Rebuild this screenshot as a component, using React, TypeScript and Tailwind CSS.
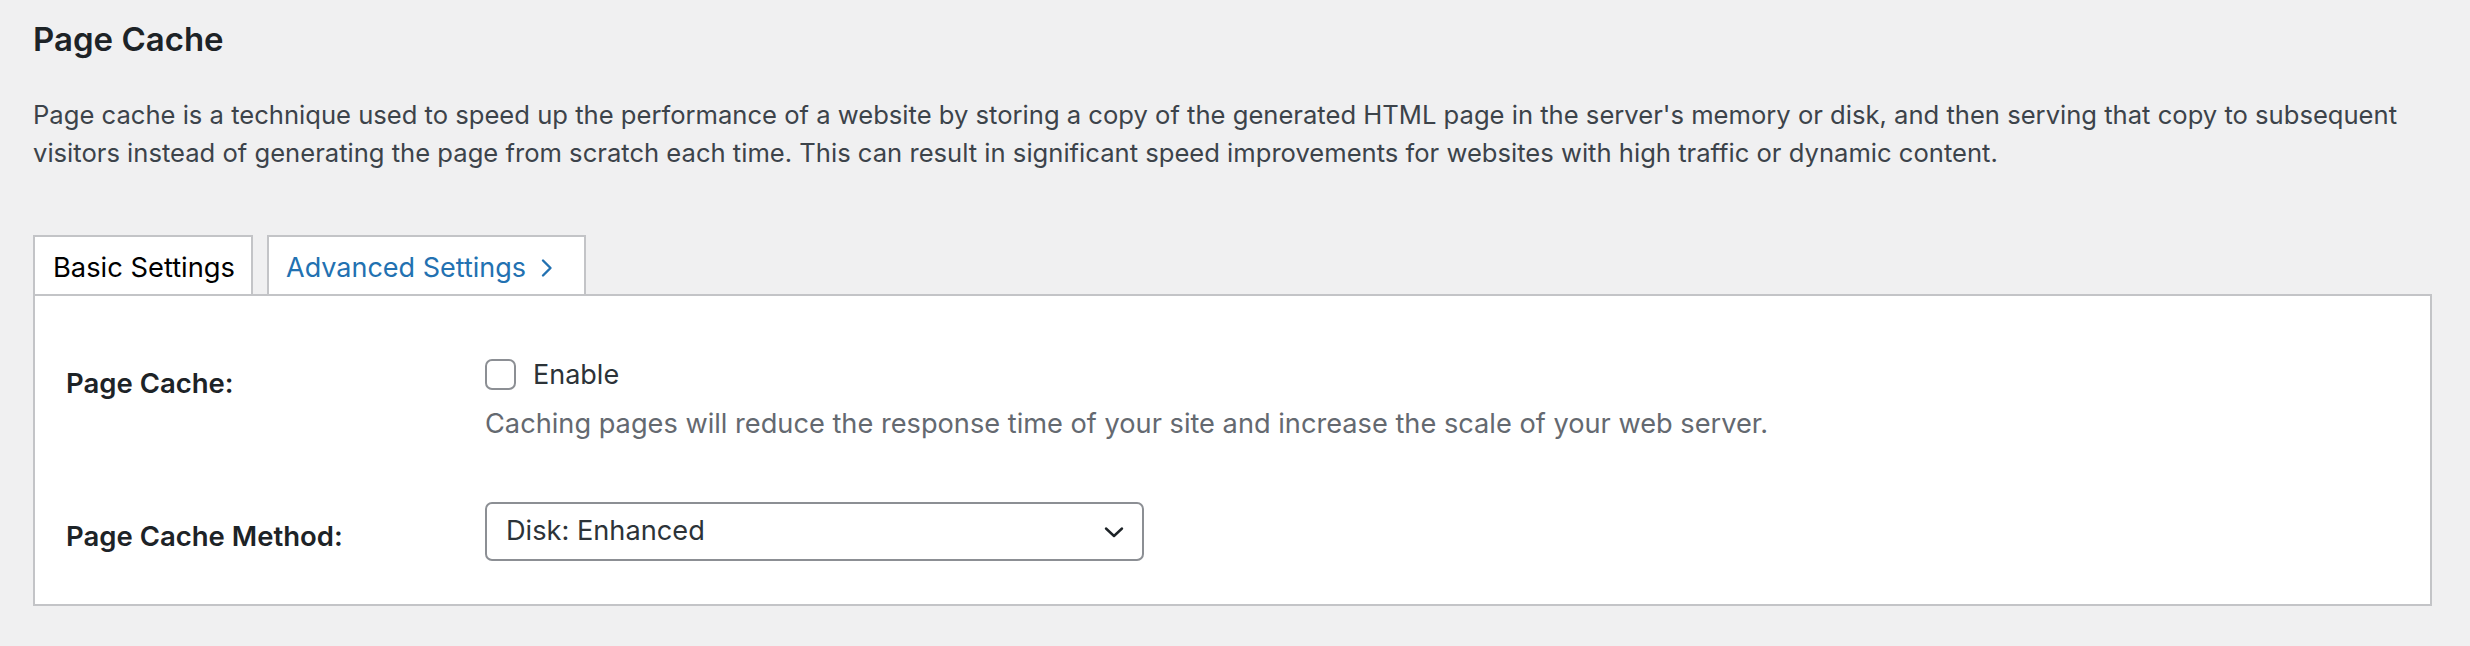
import React from "react";

function ChevronRight() {
  return (
    <svg width="14" height="22" viewBox="0 0 14 22" fill="none" className="ml-[14px]">
      <path d="M3 3.5 L10.5 11 L3 18.5" stroke="#2271b1" strokeWidth="2.4" strokeLinecap="round" strokeLinejoin="round" />
    </svg>
  );
}

function ChevronDown() {
  return (
    <svg width="22" height="14" viewBox="0 0 22 14" fill="none">
      <path d="M3 3.5 L11 11 L19 3.5" stroke="#1d2327" strokeWidth="2.4" strokeLinecap="round" strokeLinejoin="round" />
    </svg>
  );
}

export default function App() {
  return (
    <div className="min-h-screen w-full bg-[#f0f0f1] font-['Inter',sans-serif] pl-[33px] pr-[38px]">
      <h1 className="pt-[19px] text-[33px] leading-[40px] font-semibold text-[#1d2327]">Page Cache</h1>
      <p className="mt-[37px] text-[25.6px] leading-[38px] text-[#3c434a] whitespace-nowrap">
        Page cache is a technique used to speed up the performance of a website by storing a copy of the generated HTML page in the server's memory or disk, and then serving that copy to subsequent
        <br />
        visitors instead of generating the page from scratch each time. This can result in significant speed improvements for websites with high traffic or dynamic content.
      </p>
      <div className="mt-[63px] flex gap-[14px]">
        <div className="h-[59px] border-2 border-b-0 border-[#c3c4c7] bg-white pl-[18px] pr-[16px] pt-[5px] flex items-center text-[27.3px] text-[#000000]">
          Basic Settings
        </div>
        <div className="h-[59px] border-2 border-b-0 border-[#c3c4c7] bg-white pl-[17px] pr-[30px] pt-[5px] flex items-center text-[27px] text-[#2271b1]">
          Advanced Settings
          <ChevronRight />
        </div>
      </div>
      <div className="border-2 border-[#c3c4c7] bg-white pl-[31px] pb-[43px]">
        <div className="grid grid-cols-[419px_1fr]">
          <div className="pt-[72px] text-[27.5px] leading-[30px] font-semibold text-[#1d2327]">Page Cache:</div>
          <div className="pt-[63px]">
            <div className="flex items-center h-[31px]">
              <span className="block w-[31px] h-[31px] rounded-[7px] border-2 border-[#8c8f94] bg-white"></span>
              <span className="ml-[17px] text-[27px] text-[#2c3338] leading-[31px]">Enable</span>
            </div>
            <p className="mt-[16px] text-[27.2px] leading-[36px] text-[#646970] whitespace-nowrap">
              Caching pages will reduce the response time of your site and increase the scale of your web server.
            </p>
          </div>
          <div className="pt-[79px] text-[27.5px] leading-[30px] font-semibold text-[#1d2327]">Page Cache Method:</div>
          <div className="pt-[60px]">
            <div className="w-[659px] h-[59px] rounded-[7px] border-2 border-[#8c8f94] bg-white flex items-center justify-between pl-[19px] pr-[17px]">
              <span className="text-[27.2px] text-[#2c3338]">Disk: Enhanced</span>
              <ChevronDown />
            </div>
          </div>
        </div>
      </div>
    </div>
  );
}
